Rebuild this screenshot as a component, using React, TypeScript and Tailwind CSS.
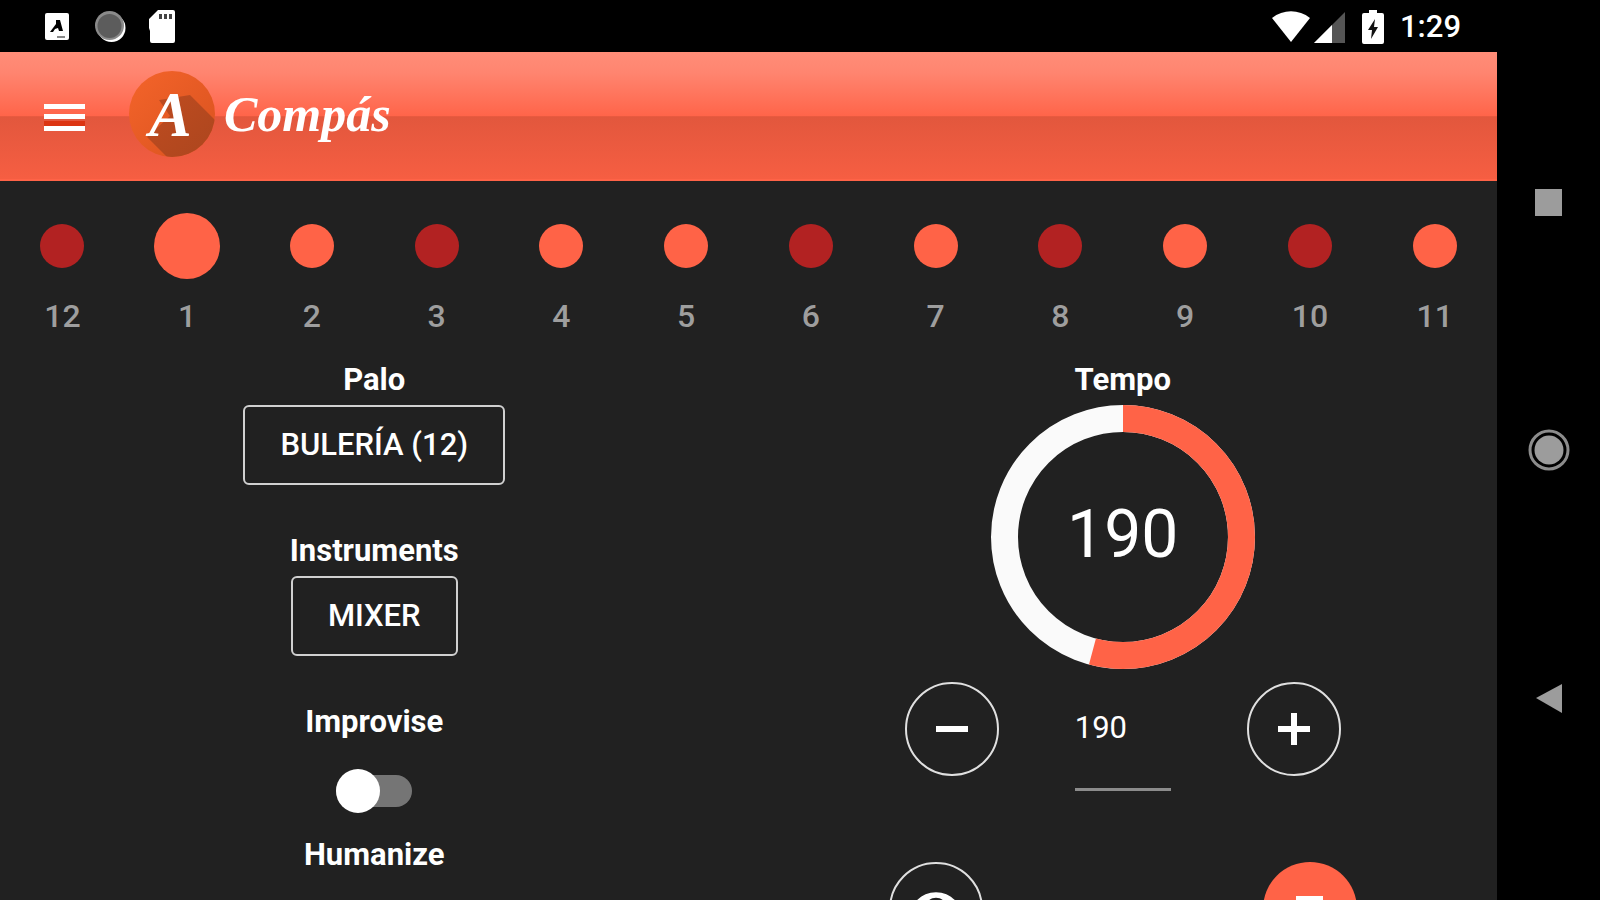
import { useState } from "react";

const beats = [
  { label: 12, accent: true },
  { label: 1, accent: false },
  { label: 2, accent: false },
  { label: 3, accent: true },
  { label: 4, accent: false },
  { label: 5, accent: false },
  { label: 6, accent: true },
  { label: 7, accent: false },
  { label: 8, accent: true },
  { label: 9, accent: false },
  { label: 10, accent: true },
  { label: 11, accent: false },
];

const MAX_TEMPO = 351;
const DIAL_RADIUS = 118.5;

function StatusBar() {
  return (
    <div className="flex h-[52px] shrink-0 items-center justify-between bg-black pt-0.5 pr-[139px] pl-11">
      <div className="flex items-center">
        <svg className="h-7 w-[26px]" viewBox="0 0 26 28" aria-hidden="true">
          <rect x="1" y="0" width="24" height="27" rx="2" fill="#fff" />
          <path d="M12 7h4l3 11h-4l-1-3-3 1-2 3H6l6-8z" fill="#000" />
          <rect x="13" y="23" width="8" height="2" fill="#888" />
        </svg>
        <svg className="ml-6 h-8 w-8" viewBox="0 0 32 32" aria-hidden="true">
          <circle cx="17.500" cy="17" r="14" fill="#fff" />
          <circle cx="15.500" cy="14.500" r="14.500" fill="#8a8a8a" />
          <circle cx="15.500" cy="15" r="12" fill="#5c5c5c" />
        </svg>
        <svg className="ml-[22px] h-[34px] w-7" viewBox="0 0 28 34" aria-hidden="true">
          <path d="M10 0h15a2 2 0 0 1 2 2v29a2 2 0 0 1-2 2H4a2 2 0 0 1-2-2V21L1 18V9z" fill="#fff" />
          <path d="M11 4h3v5h-3zM16 4h3v5h-3zM21 4h3v5h-3z" fill="#444" />
        </svg>
      </div>
      <div className="flex items-center">
        <svg className="h-8 w-[38px]" viewBox="0 0 38 32" aria-hidden="true">
          <path d="M0 7C11-2 27-2 38 7L19 31z" fill="#fff" />
        </svg>
        <svg className="ml-1 h-8 w-8" viewBox="0 0 32 32" aria-hidden="true">
          <path d="M31 1v31H0z" fill="#555" />
          <path d="M18 14v18H0z" fill="#fff" />
        </svg>
        <svg className="ml-4 h-[34px] w-[22px]" viewBox="0 0 22 34" aria-hidden="true">
          <path d="M7 0h8v3h5a2 2 0 0 1 2 2v27a2 2 0 0 1-2 2H2a2 2 0 0 1-2-2V5a2 2 0 0 1 2-2h5z" fill="#fff" />
          <path d="M13 9 6 20h4l-1 9 7-12h-4z" fill="#111" />
        </svg>
        <time className="ml-4 text-[31px] leading-10 font-medium text-white">1:29</time>
      </div>
    </div>
  );
}

function Header() {
  return (
    <header className="flex h-[129px] shrink-0 items-center border-b-2 border-[#ff6347] bg-[linear-gradient(to_bottom,#ff8d78_0%,#ff8570_16%,#ff654a_50%,#e2573d_51%,#f65e42_100%)] pl-11">
      <button type="button" aria-label="Menu">
        <svg className="h-8 w-[41px]" viewBox="0 0 41 32" aria-hidden="true">
          <path d="M0 21h41v6H0z" fill="#dc3412" />
          <path d="M0 4h41v5H0zM0 14h41v5H0zM0 26h41v5H0z" fill="#fff" />
        </svg>
      </button>
      <div className="ml-[43px] flex items-center gap-2 pb-1">
        <svg className="size-[88px]" viewBox="0 0 88 88" role="img" aria-label="A">
          <defs>
            <linearGradient id="disc" x1="0" y1="0" x2="1" y2="1">
              <stop offset="0" stopColor="#f4642a" />
              <stop offset="1" stopColor="#d9521f" />
            </linearGradient>
            <linearGradient id="shade" x1="0" y1="0" x2="1" y2="1">
              <stop offset="0" stopColor="#c04c20" />
              <stop offset="1" stopColor="#a9451e" />
            </linearGradient>
            <clipPath id="round">
              <circle cx="44" cy="44" r="43" />
            </clipPath>
          </defs>
          <circle cx="44" cy="44" r="43" fill="url(#disc)" />
          <path d="M31 30 62 25 96 59V96H48L19 67 42 46z" fill="url(#shade)" clipPath="url(#round)" />
          <text x="21" y="66" fill="#fff" fontFamily="Liberation Serif, serif" fontSize="64" fontStyle="italic" fontWeight="700">A</text>
        </svg>
        <h1 className="font-['Liberation_Serif',serif] text-[50px] leading-[60px] font-bold text-white italic">
          Compás
        </h1>
      </div>
    </header>
  );
}

function BeatRow() {
  return (
    <ol className="grid grid-cols-12 pt-[31px]">
      {beats.map((beat, i) => (
        <li key={beat.label} className="flex flex-col items-center">
          <span className="flex h-[68px] items-center">
            <span
              className={
                i === 1
                  ? "size-[66px] rounded-full bg-[#ff6347]"
                  : beat.accent
                    ? "size-11 rounded-full bg-[#b22222]"
                    : "size-11 rounded-full bg-[#ff6347]"
              }
            />
          </span>
          <span className="mt-[14px] text-[32px] leading-[44px] font-medium text-[#9e9e9e]">{beat.label}</span>
        </li>
      ))}
    </ol>
  );
}

const heading = "text-[31px] leading-[50px] font-bold text-white";
const outlined =
  "h-20 rounded-md border-2 border-[#d0d0d0] px-[35px] text-[31px] leading-10 font-medium text-white";
const round =
  "flex size-[94px] items-center justify-center rounded-full border-2 border-[#e0e0e0] text-white";

function Settings() {
  const [improvise, setImprovise] = useState(false);
  return (
    <section className="flex flex-col items-center">
      <h2 className={heading}>Palo</h2>
      <button type="button" className={outlined}>BULERÍA (12)</button>
      <h2 className={`mt-[41px] ${heading}`}>Instruments</h2>
      <button type="button" className={outlined}>MIXER</button>
      <label htmlFor="improvise" className={`mt-[41px] ${heading}`}>Improvise</label>
      <input
        id="improvise"
        type="checkbox"
        role="switch"
        checked={improvise}
        onChange={(e) => setImprovise(e.target.checked)}
        className="mt-7 flex h-8 w-[76px] appearance-none items-center rounded-full bg-[#757575] before:size-11 before:shrink-0 before:rounded-full before:bg-white checked:justify-end"
      />
      <h2 className={`mt-[23px] ${heading}`}>Humanize</h2>
    </section>
  );
}

function Tempo() {
  const [tempo, setTempo] = useState(190);
  const length = 2 * Math.PI * DIAL_RADIUS;
  return (
    <section className="flex flex-col items-center">
      <h2 className={heading}>Tempo</h2>
      <div className="grid place-items-center">
        <svg className="col-start-1 row-start-1 size-[264px] -rotate-90" viewBox="0 0 264 264" aria-hidden="true">
          <circle cx="132" cy="132" r={DIAL_RADIUS} fill="none" stroke="#fafafa" strokeWidth="27" />
          <circle
            cx="132"
            cy="132"
            r={DIAL_RADIUS}
            fill="none"
            stroke="#ff6347"
            strokeWidth="27"
            strokeDasharray={`${(tempo / MAX_TEMPO) * length} ${length}`}
          />
        </svg>
        <output className="col-start-1 row-start-1 pb-1 text-[66px] leading-[80px] text-white">{tempo}</output>
      </div>
      <div className="mt-[13px] flex items-start gap-19">
        <button type="button" aria-label="Slower" className={round} onClick={() => setTempo(tempo - 1)}>
          <svg className="size-8" viewBox="0 0 32 32" aria-hidden="true">
            <path d="M0 13h32v6H0z" fill="currentColor" />
          </svg>
        </button>
        <div className="w-24 border-b-3 border-[#8c8c8c] pb-4">
          <input
            aria-label="Tempo"
            inputMode="numeric"
            value={tempo}
            onChange={(e) => setTempo(Number(e.target.value) || 0)}
            className="block h-[90px] w-full bg-transparent text-[31px] text-white outline-none"
          />
        </div>
        <button type="button" aria-label="Faster" className={round} onClick={() => setTempo(tempo + 1)}>
          <svg className="size-8" viewBox="0 0 32 32" aria-hidden="true">
            <path d="M0 13h13V0h6v13h13v6H19v13h-6V19H0z" fill="currentColor" />
          </svg>
        </button>
      </div>
      <div className="mt-[71px] grid w-full grid-cols-2 justify-items-center">
        <button type="button" aria-label="Show" className={round}>
          <svg className="size-[54px] shrink-0" viewBox="0 0 24 24" fill="currentColor" aria-hidden="true">
            <path d="M12 4.500C7 4.500 2.730 7.610 1 12c1.730 4.390 6 7.500 11 7.500s9.270-3.110 11-7.500c-1.730-4.390-6-7.500-11-7.500zM12 17c-2.760 0-5-2.240-5-5s2.240-5 5-5 5 2.240 5 5-2.240 5-5 5zm0-8c-1.660 0-3 1.340-3 3s1.340 3 3 3 3-1.340 3-3-1.340-3-3-3z" />
          </svg>
        </button>
        <button type="button" aria-label="Stop" className="flex size-[94px] items-center justify-center rounded-full bg-[#ff6347]">
          <span className="size-[27px] bg-white" />
        </button>
      </div>
    </section>
  );
}

function NavigationBar() {
  return (
    <nav aria-label="System" className="flex w-[103px] shrink-0 flex-col items-center justify-center gap-[206px] bg-black pb-[52px]">
      <button type="button" aria-label="Recent apps" className="flex size-[42px] items-center justify-center">
        <span className="size-[27px] bg-[#9c9c9c]" />
      </button>
      <button type="button" aria-label="Home">
        <svg className="size-[42px]" viewBox="0 0 42 42" aria-hidden="true">
          <circle cx="21" cy="21" r="19" fill="none" stroke="#8c8c8c" strokeWidth="3" />
          <circle cx="21" cy="21" r="14.500" fill="#9c9c9c" />
        </svg>
      </button>
      <button type="button" aria-label="Back">
        <svg className="size-[42px]" viewBox="0 0 42 42" aria-hidden="true">
          <path d="M8 21 34 7v29z" fill="#9c9c9c" />
        </svg>
      </button>
    </nav>
  );
}

export default function App() {
  return (
    <div className="flex h-screen flex-col overflow-hidden bg-black font-[Roboto,sans-serif]">
      <StatusBar />
      <div className="flex min-h-0 flex-1">
        <div className="flex min-w-0 flex-1 flex-col overflow-hidden bg-[#212121]">
          <Header />
          <main>
            <BeatRow />
            <div className="mt-[17px] grid grid-cols-2">
              <Settings />
              <Tempo />
            </div>
          </main>
        </div>
        <NavigationBar />
      </div>
    </div>
  );
}
